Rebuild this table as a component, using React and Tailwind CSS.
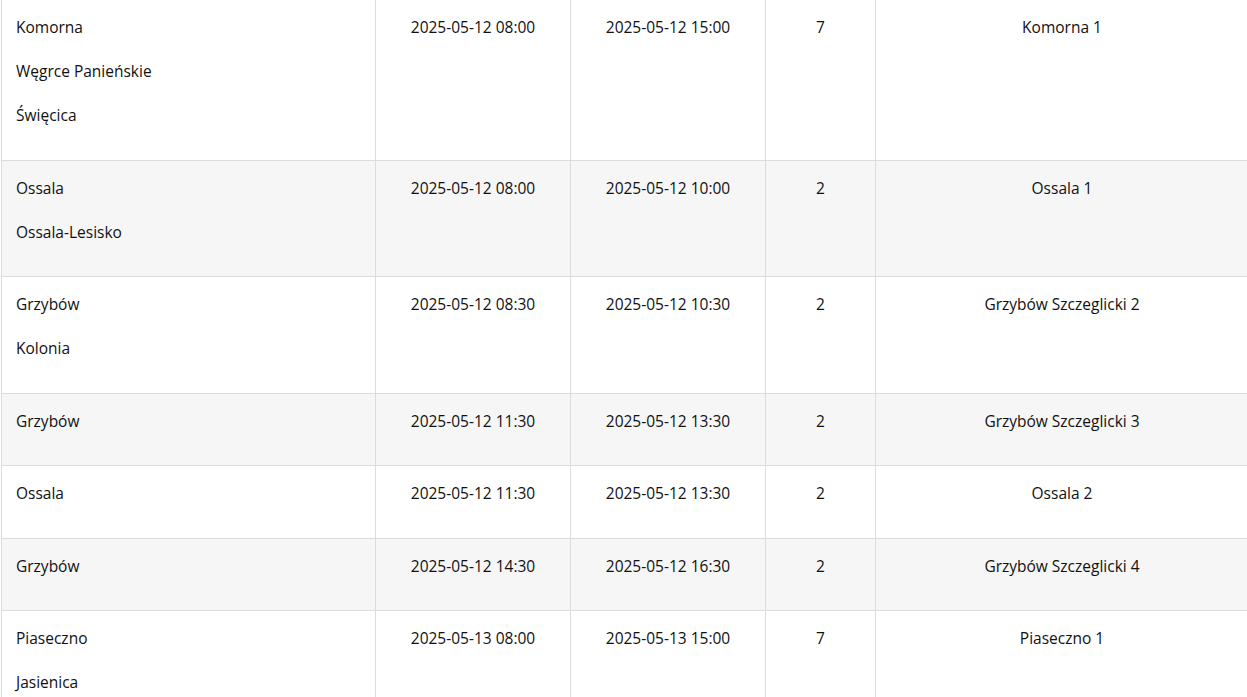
import React from "react";

const rows = [
    { places: ["Komorna", "Węgrce Panieńskie", "Święcica"], start: "2025-05-12 08:00", end: "2025-05-12 15:00", count: 7, name: "Komorna 1" },
    { places: ["Ossala", "Ossala-Lesisko"], start: "2025-05-12 08:00", end: "2025-05-12 10:00", count: 2, name: "Ossala 1" },
    { places: ["Grzybów", "Kolonia"], start: "2025-05-12 08:30", end: "2025-05-12 10:30", count: 2, name: "Grzybów Szczeglicki 2" },
    { places: ["Grzybów"], start: "2025-05-12 11:30", end: "2025-05-12 13:30", count: 2, name: "Grzybów Szczeglicki 3" },
    { places: ["Ossala"], start: "2025-05-12 11:30", end: "2025-05-12 13:30", count: 2, name: "Ossala 2" },
    { places: ["Grzybów"], start: "2025-05-12 14:30", end: "2025-05-12 16:30", count: 2, name: "Grzybów Szczeglicki 4" },
    { places: ["Piaseczno", "Jasienica"], start: "2025-05-13 08:00", end: "2025-05-13 15:00", count: 7, name: "Piaseczno 1" },
];

const App = () => {
    return (
        <div className="w-[1247px] h-[697px] overflow-hidden bg-white">
            <table
                className="-mt-px ml-px w-[1248px] border-collapse table-fixed text-[15.5px] text-[#111111]"
                style={{ fontFamily: '"Open Sans", "Noto Sans", sans-serif' }}
            >
                <colgroup>
                    <col className="w-[374px]" />
                    <col className="w-[195px]" />
                    <col className="w-[195px]" />
                    <col className="w-[110px]" />
                    <col />
                </colgroup>
                <tbody>
                    {rows.map((row, index) => (
                        <tr key={index} className={index % 2 === 1 ? "bg-[#f6f6f6]" : "bg-white"}>
                            <td className="border border-[#dcdcdc] align-top pl-[14px] pt-[15px] pb-[12.5px]">
                                {row.places.map((place) => (
                                    <div key={place} className="leading-6 mb-5">{place}</div>
                                ))}
                            </td>
                            <td className="border border-[#dcdcdc] align-top text-center pt-[15px] leading-6">{row.start}</td>
                            <td className="border border-[#dcdcdc] align-top text-center pt-[15px] leading-6">{row.end}</td>
                            <td className="border border-[#dcdcdc] align-top text-center pt-[15px] leading-6">{row.count}</td>
                            <td className="border border-[#dcdcdc] align-top text-center pt-[15px] leading-6">{row.name}</td>
                        </tr>
                    ))}
                </tbody>
            </table>
        </div>
    );
};

export default App;
